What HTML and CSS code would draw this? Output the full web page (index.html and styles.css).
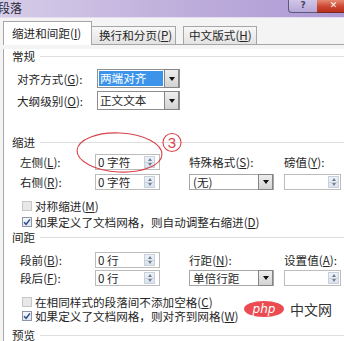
FILE: index.html
```html
<!DOCTYPE html>
<html lang="zh-CN">
<head>
<meta charset="utf-8">
<title>段落</title>
<link rel="stylesheet" href="styles.css">
</head>
<body>
<div class="titlebar">
  <span class="title">段落</span>
  <div class="caption">
    <div class="cap-btn help">?</div>
    <div class="cap-btn close">✕</div>
  </div>
</div>
<div class="client">
  <div class="tabs">
    <div class="tab active t1">缩进和间距(<u>I</u>)</div>
    <div class="tab t2">换行和分页(<u>P</u>)</div>
    <div class="tab t3">中文版式(<u>H</u>)</div>
  </div>
  <div class="panel">
    <div class="group g-general">常规</div>
    <div class="form-general">
      <span class="lbl">对齐方式(<u>G</u>):</span>
      <div class="select"><span class="val hl">两端对齐</span><span class="drop"></span></div>
      <span class="lbl">大纲级别(<u>O</u>):</span>
      <div class="select"><span class="val">正文文本</span><span class="drop"></span></div>
    </div>

    <div class="group g-indent">缩进</div>
    <div class="form-grid grid-indent">
      <span class="lbl">左侧(<u>L</u>):</span>
      <div class="spin"><span class="v">0 字符</span><span class="spinner"><i class="up"></i><i class="dn"></i></span></div>
      <span class="lbl">特殊格式(<u>S</u>):</span>
      <span class="lbl">磅值(<u>Y</u>):</span>
      <span class="lbl">右侧(<u>R</u>):</span>
      <div class="spin"><span class="v">0 字符</span><span class="spinner"><i class="up"></i><i class="dn"></i></span></div>
      <div class="select wide"><span class="val">(无)</span><span class="drop"></span></div>
      <div class="spin num"><span class="v"></span><span class="spinner"><i class="up"></i><i class="dn"></i></span></div>
    </div>
    <div class="check c-sym"><span class="box"></span>对称缩进(<u>M</u>)</div>
    <div class="check c-grid1"><span class="box on"><svg width="8" height="8" viewBox="0 0 8 8"><path d="M1 4.2 L3.1 6.3 L7 1.4" fill="none" stroke="#2d4f8e" stroke-width="1.5"/></svg></span>如果定义了文档网格，则自动调整右缩进(<u>D</u>)</div>

    <div class="group g-spacing">间距</div>
    <div class="form-grid grid-spacing">
      <span class="lbl">段前(<u>B</u>):</span>
      <div class="spin"><span class="v">0 行</span><span class="spinner"><i class="up"></i><i class="dn"></i></span></div>
      <span class="lbl">行距(<u>N</u>):</span>
      <span class="lbl">设置值(<u>A</u>):</span>
      <span class="lbl">段后(<u>F</u>):</span>
      <div class="spin"><span class="v">0 行</span><span class="spinner"><i class="up"></i><i class="dn"></i></span></div>
      <div class="select wide"><span class="val">单倍行距</span><span class="drop"></span></div>
      <div class="spin num"><span class="v"></span><span class="spinner"><i class="up"></i><i class="dn"></i></span></div>
    </div>
    <div class="check c-same"><span class="box"></span>在相同样式的段落间不添加空格(<u>C</u>)</div>
    <div class="check c-grid2"><span class="box on"><svg width="8" height="8" viewBox="0 0 8 8"><path d="M1 4.2 L3.1 6.3 L7 1.4" fill="none" stroke="#2d4f8e" stroke-width="1.5"/></svg></span>如果定义了文档网格，则对齐到网格(<u>W</u>)</div>

    <div class="group g-preview">预览</div>
  </div>
</div>

<div class="watermark"><span class="php">php</span><span class="cn">中文网</span></div>

<svg class="annot" width="344" height="341" viewBox="0 0 344 341">
  <ellipse cx="119.5" cy="152.5" rx="42.5" ry="19.5" transform="rotate(3 119.5 152.5)" fill="none" stroke="#d8424a" stroke-width="1.1"/>
  <circle cx="172" cy="142.5" r="9" fill="none" stroke="#d8424a" stroke-width="1.1"/>
  <text x="172" y="148" text-anchor="middle" font-family="Liberation Sans, sans-serif" font-size="15" fill="#d8424a">3</text>
</svg>
</body>
</html>
```

FILE: styles.css
```css
* { box-sizing: border-box; margin: 0; padding: 0; }
html, body { width: 344px; height: 341px; overflow: hidden; }
body {
  position: relative;
  font-family: "Noto Sans CJK SC", "Noto Sans", sans-serif;
  font-size: 11.6px;
  color: #262626;
  background: #f4f4f4;
}
u { text-decoration: underline; text-underline-offset: 1px; }

/* title bar */
.titlebar {
  height: 18px;
  display: flex;
  justify-content: space-between;
  background: linear-gradient(to right, #d6cde8 0%, #c1b2dd 45%, #ad98d4 100%);
  border-bottom: 1px solid #e4def0;
}
.title { font-size: 12px; line-height: 15px; margin-left: -2px; color: #2a2838; }
.caption { display: flex; align-items: flex-start; }
.cap-btn {
  height: 13px;
  font-family: "DejaVu Sans", sans-serif;
  font-weight: bold;
  font-size: 9px;
  line-height: 10px;
  text-align: center;
}
.help {
  width: 29px;
  border-left: 1px solid #5c587a;
  border-bottom: 1px solid #5c587a;
  border-bottom-left-radius: 4px;
  background: linear-gradient(#d0c6e7, #b6a7d8);
  color: #454260;
}
.close {
  width: 27px;
  border-bottom: 1px solid #7a2a22;
  background: linear-gradient(#e58a72, #cc4630 55%, #b8301e);
  color: #fff;
  padding-left: 6px;
}

/* client area */
.client { padding: 3px 0 0 3px; }
.tabs {
  display: flex;
  align-items: flex-end;
  height: 24px;
  background: linear-gradient(#a6a6a6, #a6a6a6) left bottom / 100% 1px no-repeat;
}
.tab {
  height: 19px;
  line-height: 17px;
  border: 1px solid #a6a6a6;
  background: linear-gradient(#f7f7f7, #e3e3e3);
  white-space: nowrap;
}
.tab.active {
  height: 24px;
  line-height: 22px;
  border-bottom: none;
  background: #fff;
}
.t1 { width: 89px; padding-left: 8px; }
.t2 { width: 85px; padding-left: 7px; margin-left: -1px; }
.t3 { width: 74px; padding-left: 5px; margin-left: 7px; }

.panel {
  height: 295px;
  background: #fff;
  border-left: 1px solid #a9a9a9;
  padding-left: 8px;
}

.group {
  display: flex;
  align-items: center;
  height: 14px;
  line-height: 14px;
}
.group::after {
  content: "";
  flex: 1;
  height: 1px;
  margin-left: 5px;
  background: #dedede;
}
.g-general { margin-top: 4px; }
.g-indent { margin-top: 25px; }
.g-spacing { margin-top: 1px; }
.g-preview { margin-top: 5px; }

.lbl { white-space: nowrap; line-height: 16px; }

/* general */
.form-general {
  display: grid;
  grid-template-columns: 80px 83px;
  grid-auto-rows: 19px;
  row-gap: 3px;
  align-items: center;
  margin: 6px 0 0 5px;
}

/* select */
.select {
  display: flex;
  height: 19px;
  border: 1px solid #8e8e8e;
  background: #fff;
  padding: 1px 0 1px 1px;
}
.select .val { flex: 1; line-height: 15px; padding-left: 1px; white-space: nowrap; }
.select .val.hl { background: #3c94ea; color: #fff; }
.drop {
  width: 15px;
  margin: -2px 0 -2px 1px;
  border: 1px solid #858585;
  background: linear-gradient(#eeeeee, #d3d3d3);
  display: flex;
  align-items: center;
  justify-content: center;
}
.drop::before {
  content: "";
  border-left: 3px solid transparent;
  border-right: 3px solid transparent;
  border-top: 4px solid #111;
}
.select.wide { width: 85px; height: 16px; border-color: #a7a7a7; }
.select.wide .val { line-height: 12px; padding-left: 2px; }

/* indent / spacing grids */
.form-grid {
  display: grid;
  grid-template-columns: 75px 94px 95px 60px;
  grid-template-rows: 16px 16px;
  align-items: center;
  margin-left: 8px;
}
.grid-indent { margin-top: 5px; row-gap: 4px; }
.grid-spacing { margin-top: 8px; row-gap: 2px; }

.spin {
  display: flex;
  align-items: center;
  width: 65px;
  height: 16px;
  border: 1px solid #bcbcbc;
  background: #fff;
  padding: 0 4px 0 2px;
}
.spin .v { flex: 1; line-height: 14px; white-space: nowrap; }
.spin.num { width: 57px; padding-right: 1px; }
.spinner {
  width: 11px;
  height: 12px;
  display: flex;
  flex-direction: column;
  border: 1px solid #c9d1dc;
  background: linear-gradient(#eef2f7, #dbe3ed);
}
.spinner i {
  flex: 1;
  display: flex;
  align-items: center;
  justify-content: center;
}
.spinner i.dn { border-top: 1px solid #c9d1dc; }
.spinner i.up::before {
  content: "";
  border-left: 2.5px solid transparent;
  border-right: 2.5px solid transparent;
  border-bottom: 3px solid #6f7f96;
}
.spinner i.dn::before {
  content: "";
  border-left: 2.5px solid transparent;
  border-right: 2.5px solid transparent;
  border-top: 3px solid #6f7f96;
}

/* checkboxes */
.check {
  display: flex;
  align-items: center;
  height: 14px;
  line-height: 14px;
  margin-left: 10px;
  white-space: nowrap;
}
.box {
  width: 10px;
  height: 10px;
  margin-right: 3px;
  border: 1px solid #c6c6c6;
  background: #e8e8e8;
  display: flex;
  align-items: center;
  justify-content: center;
}
.box.on {
  border-color: #8d96a8;
  background: linear-gradient(#f4f6f9, #e2e7ee);
}
.c-sym { margin-top: 9px; }
.c-grid1 { margin-top: 2px; }
.c-same { margin-top: 9px; }
.c-grid2 { margin-top: 0; }

/* overlays */
.watermark {
  position: absolute;
  left: 244px;
  top: 301px;
  display: flex;
  align-items: center;
}
.php {
  width: 40px;
  height: 16px;
  border-radius: 50%;
  background: #ec4b52;
  color: #fff;
  font-family: "DejaVu Sans", sans-serif;
  font-style: italic;
  font-size: 12px;
  line-height: 16px;
  text-align: center;
}
.cn {
  margin-left: 6px;
  font-size: 14px;
  line-height: 16px;
  color: #333;
}
.annot { position: absolute; left: 0; top: 0; pointer-events: none; }
```
